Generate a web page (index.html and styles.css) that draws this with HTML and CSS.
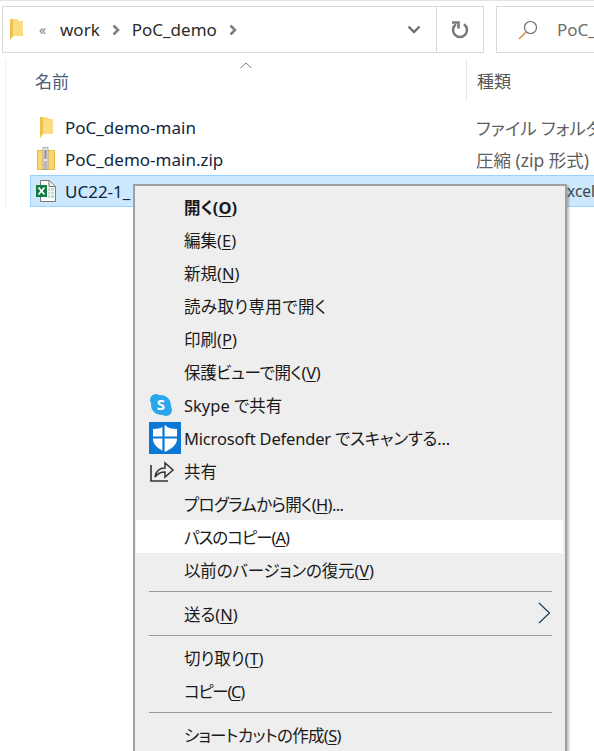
FILE: index.html
```html
<!DOCTYPE html>
<html lang="ja">
<head>
<meta charset="utf-8">
<title>エクスプローラー</title>
<link rel="stylesheet" href="styles.css">
</head>
<body>
<div class="window">
  <div class="toolbar">
    <div class="address">
      <svg class="addr-folder" width="15" height="21" viewBox="0 0 15 21"><path d="M1 0h7l2 2h4v15H4l-3 4z" fill="#fbdc82"/><path d="M1 0h3v17l-3 4z" fill="#f0c14e"/></svg>
      <span class="chev-l">«</span>
      <span class="crumb">work</span>
      <svg class="sep" width="9" height="12" viewBox="0 0 9 12"><path d="M1.500 1.500 6 6l-4.500 4.500" fill="none" stroke="#808080" stroke-width="2.600"/></svg>
      <span class="crumb">PoC_demo</span>
      <svg class="sep" width="9" height="12" viewBox="0 0 9 12"><path d="M1.500 1.500 6 6l-4.500 4.500" fill="none" stroke="#808080" stroke-width="2.600"/></svg>
      <svg class="drop" width="14" height="9" viewBox="0 0 14 9"><path d="M1.500 1.500 7 7l5.500-5.500" fill="none" stroke="#707070" stroke-width="2.400"/></svg>
      <div class="refresh">
        <svg width="18" height="18" viewBox="0 0 18 18"><path d="M5 3.300A7 7 0 1 0 13 3.300" fill="none" stroke="#7a7a7a" stroke-width="2.600"/><path d="M1 1.500h6.500v6" fill="none" stroke="#7a7a7a" stroke-width="2.600"/></svg>
      </div>
    </div>
    <div class="search">
      <svg width="20" height="20" viewBox="0 0 20 20"><circle cx="12.500" cy="7.500" r="6" fill="none" stroke="#6e6e6e" stroke-width="1.200"/><path d="M8.200 12 1 19" stroke="#d8853a" stroke-width="1.400"/></svg>
      <span class="search-text">PoC_</span>
    </div>
  </div>
  <div class="main">
    <div class="headers">
      <div class="col-name">名前<span class="sort"><svg width="12" height="7" viewBox="0 0 12 7"><path d="M.5 6 6 1l5.500 5" fill="none" stroke="#777" stroke-width="1"/></svg></span></div>
      <div class="col-type">種類</div>
    </div>
    <div class="rows">
      <div class="row">
        <svg class="ficon" width="20" height="21" viewBox="0 0 20 21"><path d="M4 0h7l2 2h4v15H7l-3 4z" fill="#fbdc82"/><path d="M4 0h3v17l-3 4z" fill="#f0c14e"/></svg>
        <span class="fname">PoC_demo-main</span><span class="ftype">ファイル フォルダー</span>
      </div>
      <div class="row">
        <svg class="ficon" width="20" height="24" viewBox="0 0 20 24"><path d="M1.500 3.500h17v19h-17z" fill="#f9d66f" stroke="#e5b83f"/><path d="M7 .5h5v22H7z" fill="#e8e8e8" stroke="#9a9a9a" stroke-width=".8"/><path d="M8.500 3h2v9h-2z" fill="#8a8a8a"/><path d="M8 15h3M8 17h3M8 19h3M8 21h3" stroke="#8a8a8a"/></svg>
        <span class="fname">PoC_demo-main.zip</span><span class="ftype">圧縮 (zip 形式)</span>
      </div>
      <div class="row selected">
        <svg class="ficon sel-icon" width="20" height="22" viewBox="0 0 20 22"><path d="M4.500.5h9l6 6v15h-15z" fill="#fff" stroke="#777"/><path d="M13 .5v6h6" fill="#eee" stroke="#777"/><path d="M12 8h6v10h-6z" fill="#bfe0cb"/><path d="M14.500 8v10M12 11.300h6M12 14.600h6" stroke="#fff" stroke-width=".8"/><rect x="0" y="5" width="11" height="12" fill="#107c41"/><path d="M2.500 7.500l6 7M8.500 7.500l-6 7" stroke="#fff" stroke-width="1.800"/></svg>
        <span class="fname sel-name">UC22-1_</span><span class="ftype end">xcel</span>
      </div>
    </div>
  </div>
</div>
<div class="menu">
  <div class="item bold"><span>開く(<u>O</u>)</span></div>
  <div class="item"><span>編集(<u>E</u>)</span></div>
  <div class="item"><span>新規(<u>N</u>)</span></div>
  <div class="item wide"><span>読み取り専用で開く</span></div>
  <div class="item"><span>印刷(<u>P</u>)</span></div>
  <div class="item snug"><span>保護ビューで開く(<u>V</u>)</span></div>
  <div class="item">
    <svg class="micon" width="24" height="24" viewBox="0 0 24 24"><circle cx="7" cy="7" r="6" fill="#28a8ea"/><circle cx="17" cy="17" r="6" fill="#28a8ea"/><circle cx="12" cy="12" r="10" fill="#28a8ea"/><text x="12" y="17" text-anchor="middle" class="skype-s">S</text></svg>
    <span>Skype で共有</span>
  </div>
  <div class="item snug-light">
    <svg class="micon" width="32" height="32" viewBox="0 0 32 32"><rect width="32" height="32" fill="#0a78d4"/><path d="M16 3c3 3 7 4 12 4v10c0 6-6 10-12 13C10 27 4 23 4 17V7c5 0 9-1 12-4z" fill="#fff"/><path d="M14.500 2v29M3 15.500h26" stroke="#0a78d4" stroke-width="2.200"/></svg>
    <span>Microsoft Defender でスキャンする...</span>
  </div>
  <div class="item">
    <svg class="micon" width="26" height="24" viewBox="0 0 26 24"><path d="M2 6v16h17" fill="none" stroke="#333" stroke-width="1.600"/><path d="M6 18c1-6 5-9 10-9V4l8 7-8 7v-5c-4 0-7 1-10 5z" fill="none" stroke="#333" stroke-width="1.500"/></svg>
    <span>共有</span>
  </div>
  <div class="item tight"><span>プログラムから開く(<u>H</u>)...</span></div>
  <div class="item hover tighter"><span>パスのコピー(<u>A</u>)</span></div>
  <div class="item snug-light"><span>以前のバージョンの復元(<u>V</u>)</span></div>
  <div class="divider"></div>
  <div class="item"><span>送る(<u>N</u>)</span>
    <svg class="arrow" width="13" height="22" viewBox="0 0 13 22"><path d="M1 1l10.500 10L1 21" fill="none" stroke="#17405f" stroke-width="1.200"/></svg>
  </div>
  <div class="divider"></div>
  <div class="item"><span>切り取り(<u>T</u>)</span></div>
  <div class="item tightest"><span>コピー(<u>C</u>)</span></div>
  <div class="divider"></div>
  <div class="item tight"><span>ショートカットの作成(<u>S</u>)</span></div>
</div>
</body>
</html>
```
FILE: styles.css
```css
* { box-sizing: border-box; }
html, body { margin: 0; height: 100%; overflow: hidden; background: #fff; }
body { font-family: "Noto Sans", "Noto Sans CJK JP", sans-serif; color: #1a1a1a; font-feature-settings: "palt"; }
.window { height: 751px; border-top: 1px solid #e3e3e3; }
.toolbar { display: flex; padding: 5px 0 0 2px; height: 59px; }
.address { flex: none; width: 482px; height: 47px; border: 1px solid #d9d9d9; display: flex; align-items: center; padding-left: 6px; font-size: 17px; }
.addr-folder { flex: none; }
.chev-l { margin-left: 15px; color: #808080; font-size: 14px; width: 21px; }
.crumb { color: #2b2b2b; }
.sep { margin: 0 11px 0 12px; flex: none; }
.drop { margin-left: auto; margin-right: 15px; flex: none; }
.refresh { width: 47px; height: 100%; border-left: 1px solid #d9d9d9; display: flex; align-items: center; justify-content: center; }
.search { flex: 1; margin-left: 12px; height: 47px; border: 1px solid #d9d9d9; border-right: 0; display: flex; align-items: center; padding-left: 21px; gap: 19px; font-size: 17px; color: #6d6d6d; }
.main { margin-left: 5px; border-left: 1px solid #f0f0f0; }
.headers { display: flex; height: 41px; font-size: 17px; color: #4c607a; }
.col-name { width: 460px; padding: 8px 0 0 29px; position: relative; }
.sort { position: absolute; left: 234px; top: 2px; display: block; line-height: 0; }
.col-type { border-left: 1px solid #e5e5e5; padding: 8px 0 0 10px; color: #555; height: 41px; }
.rows { padding: 10px 0 0 24px; }
.row { display: flex; align-items: center; height: 32px; font-size: 17px; color: #10263d; white-space: nowrap; overflow: hidden; }
.row.selected { background: #cce8ff; border: 1px solid #99d1ff; border-right: 0; }
.ficon { flex: none; margin-left: 6px; }
.sel-icon { margin-left: 5px; }
.fname { flex: none; width: 411px; margin-left: 9px; }
.sel-name { width: 502px; }
.ftype { flex: none; font-size: 17.500px; color: #5f5f5f; }
.ftype.end { color: #444; font-size: 15.500px; }
.menu { position: absolute; left: 133px; top: 184px; width: 434px; height: 580px; background: #eeeeee; border: 2px solid #a0a0a0; border-bottom: 0; padding: 4px 2px 0 1px; box-shadow: 2px 2px 2px rgba(0,0,0,.25); font-size: 16.500px; color: #1a1a1a; }
.item { position: relative; height: 33px; padding-left: 48px; display: flex; align-items: center; white-space: nowrap; }
.item u { text-underline-offset: 2px; }
.wide { letter-spacing: .4px; }
.snug { letter-spacing: -.35px; }
.snug-light { letter-spacing: -.18px; }
.tight { letter-spacing: -.65px; }
.tighter { letter-spacing: -1px; }
.tightest { letter-spacing: -1.300px; }
.bold { font-weight: 700; }
.hover { background: #fff; }
.divider { height: 11px; margin-left: 13px; width: 403px; position: relative; }
.divider::before { content: ""; position: absolute; left: 0; right: 0; top: 5px; height: 1px; background: #999; }
.micon { position: absolute; left: 13px; top: 50%; transform: translateY(-50%); }
.skype-s { font-size: 15px; font-weight: 700; fill: #fff; font-family: "Noto Sans", sans-serif; }
.arrow { position: absolute; right: 12px; top: 5px; }
```
